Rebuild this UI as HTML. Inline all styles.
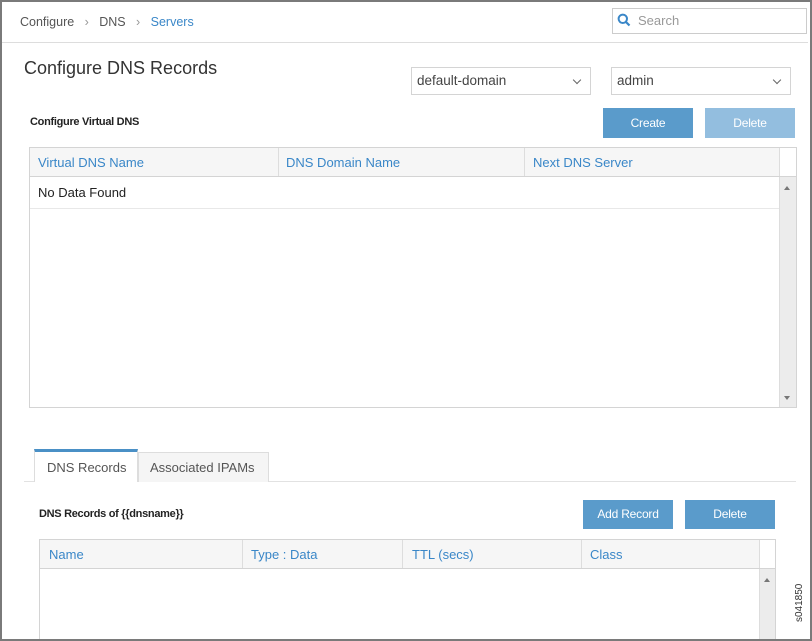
<!DOCTYPE html>
<html style="width:812px;height:641px;overflow:hidden"><head><meta charset="utf-8"><style>
*{box-sizing:border-box;margin:0;padding:0}
body{width:812px;height:641px;overflow:hidden;background:#fff;font-family:"Liberation Sans",sans-serif;position:relative;color:#333}
.a{position:absolute}
.frame{left:0;top:0;width:812px;height:641px;border:2px solid #7a7a7a;z-index:10}
.t{font-size:13px;white-space:nowrap}
.blue{color:#3a87c8}
.btn{position:absolute;background:#5a9bcb;color:#fff;font-size:12px;text-align:center;letter-spacing:-0.2px}
.sel{position:absolute;border:1px solid #d4d4d4;font-size:13.5px;color:#444;padding-left:5px;line-height:26px}
.sel:after{content:"";position:absolute;right:10px;top:9px;width:5px;height:5px;border-right:1px solid #666;border-bottom:1px solid #666;transform:rotate(45deg)}
.hdr{position:absolute;background:#f6f6f6;border:1px solid #d4d4d4}
.col{position:absolute;top:0;bottom:0;border-left:1px solid #ddd}
.ht{position:absolute;font-size:13px;color:#3a87c8;white-space:nowrap}
</style></head><body>
<div class="a frame"></div>
<div class="a t" style="left:20px;top:15px;color:#555;font-size:12.5px">Configure&nbsp;&nbsp;&nbsp;<span style="color:#999">›</span>&nbsp;&nbsp;&nbsp;DNS&nbsp;&nbsp;&nbsp;<span style="color:#999">›</span>&nbsp;&nbsp;&nbsp;<span class="blue">Servers</span></div>
<div class="a" style="left:2px;top:42px;width:806px;height:1px;background:#ddd"></div>
<div class="a" style="left:612px;top:8px;width:195px;height:26px;border:1px solid #ccc"></div>
<svg class="a" style="left:617px;top:13px" width="14" height="14" viewBox="0 0 14 14"><circle cx="5.8" cy="5.8" r="4.2" fill="none" stroke="#3a87c8" stroke-width="2"/><path d="M9 9l3.5 3.5" stroke="#3a87c8" stroke-width="2.2"/></svg>
<div class="a t" style="left:638px;top:13px;color:#999">Search</div>
<div class="a" style="left:24px;top:58px;font-size:18px;color:#333">Configure DNS Records</div>
<div class="sel" style="left:411px;top:67px;width:180px;height:28px">default-domain</div>
<div class="sel" style="left:611px;top:67px;width:180px;height:28px">admin</div>
<div class="a" style="left:30px;top:116px;font-size:11px;font-weight:bold;color:#222;letter-spacing:-0.3px">Configure Virtual DNS</div>
<div class="btn" style="left:603px;top:108px;width:90px;height:30px;line-height:30px">Create</div>
<div class="btn" style="left:705px;top:108px;width:90px;height:30px;line-height:30px;background:#93bedf">Delete</div>
<div class="a" style="left:29px;top:147px;width:768px;height:261px;border:1px solid #d4d4d4"></div>
<div class="hdr" style="left:29px;top:147px;width:768px;height:30px">
<div class="col" style="left:248px"></div><div class="col" style="left:494px"></div><div class="col" style="left:749px;background:#fff;width:17px"></div>
<div class="ht" style="left:8px;top:7px">Virtual DNS Name</div>
<div class="ht" style="left:256px;top:7px">DNS Domain Name</div>
<div class="ht" style="left:503px;top:7px">Next DNS Server</div></div>
<div class="a t" style="left:38px;top:185px;color:#222">No Data Found</div>
<div class="a" style="left:30px;top:208px;width:749px;height:1px;background:#e8e8e8"></div>
<div class="a" style="left:779px;top:177px;width:17px;height:230px;background:#ececec;border-left:1px solid #ddd"></div>
<div class="a" style="left:784px;top:183px;width:0;height:0;border:3.5px solid transparent;border-bottom:4px solid #777"></div>
<div class="a" style="left:784px;top:396px;width:0;height:0;border:3.5px solid transparent;border-top:4px solid #777"></div>
<div class="a" style="left:24px;top:481px;width:772px;height:1px;background:#e2e2e2"></div>
<div class="a" style="left:138px;top:452px;width:131px;height:30px;background:#f5f5f5;border:1px solid #ddd;border-bottom:none"></div>
<div class="a t" style="left:150px;top:460px;color:#555">Associated IPAMs</div>
<div class="a" style="left:34px;top:449px;width:104px;height:33px;background:#fff;border:1px solid #ddd;border-top:3px solid #4a90c6;border-bottom:none"></div>
<div class="a t" style="left:47px;top:460px;color:#555">DNS Records</div>
<div class="a" style="left:39px;top:508px;font-size:11px;font-weight:bold;color:#222;letter-spacing:-0.3px">DNS Records of {{dnsname}}</div>
<div class="btn" style="left:583px;top:500px;width:90px;height:29px;line-height:29px">Add Record</div>
<div class="btn" style="left:685px;top:500px;width:90px;height:29px;line-height:29px">Delete</div>
<div class="a" style="left:39px;top:539px;width:737px;height:102px;border:1px solid #d4d4d4;border-bottom:none"></div>
<div class="hdr" style="left:39px;top:539px;width:737px;height:30px">
<div class="col" style="left:202px"></div><div class="col" style="left:362px"></div><div class="col" style="left:541px"></div><div class="col" style="left:719px;background:#fff;width:16px"></div>
<div class="ht" style="left:9px;top:7px">Name</div>
<div class="ht" style="left:211px;top:7px">Type : Data</div>
<div class="ht" style="left:372px;top:7px">TTL (secs)</div>
<div class="ht" style="left:550px;top:7px">Class</div></div>
<div class="a" style="left:759px;top:569px;width:16px;height:72px;background:#ececec;border-left:1px solid #ddd"></div>
<div class="a" style="left:764px;top:575px;width:0;height:0;border:3.5px solid transparent;border-bottom:4px solid #777"></div>
<div class="a" style="left:794px;top:622px;font-size:10px;color:#333;transform:rotate(-90deg);transform-origin:0 0;white-space:nowrap">s041850</div>
</body></html>
